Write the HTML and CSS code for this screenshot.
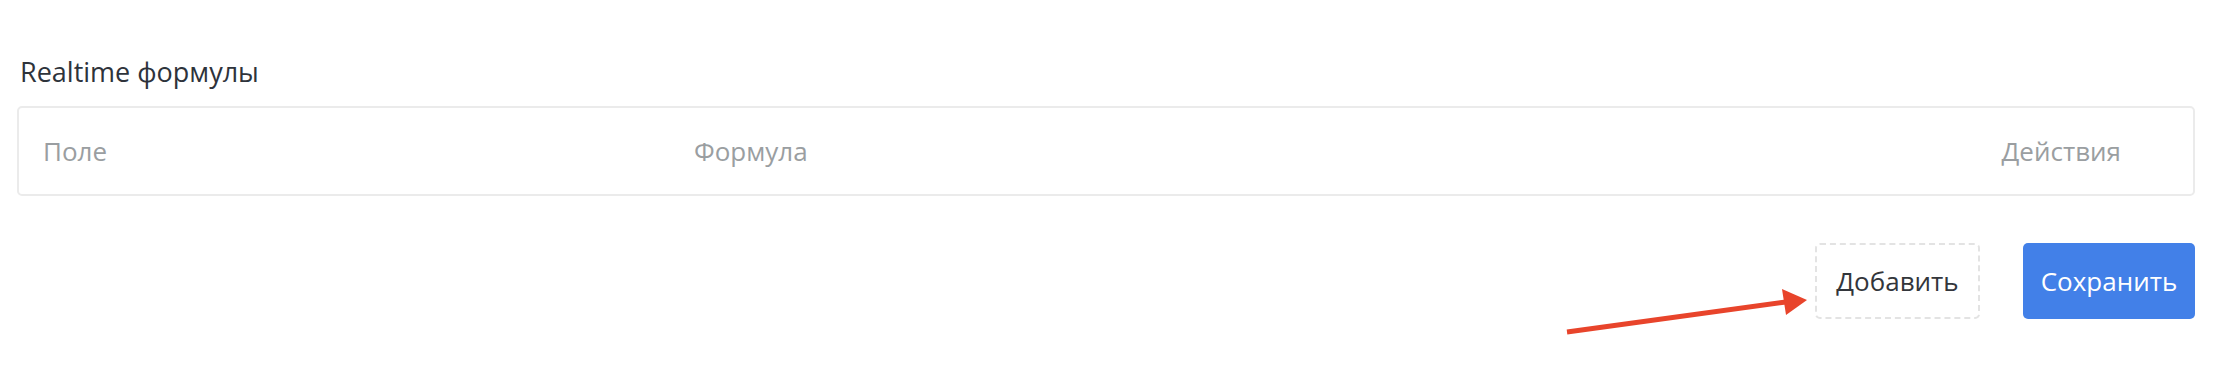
FILE: index.html
```html
<!DOCTYPE html>
<html lang="ru">
<head>
    <meta charset="UTF-8">
    <meta name="viewport" content="width=device-width, initial-scale=1.0">
    <title>Realtime формулы</title>
    <link rel="stylesheet" href="styles.css">
</head>
<body>
    <div class="formulas">
        <h3 class="formulas-title">Realtime формулы</h3>

        <div class="formulas-table">
            <div class="formulas-head">
                <div class="cell">Поле</div>
                <div class="cell">Формула</div>
                <div class="cell cell-actions">Действия</div>
            </div>
        </div>

        <div class="formulas-footer">
            <button class="btn btn-dashed">Добавить</button>
            <button class="btn btn-primary">Сохранить</button>
        </div>

        <!-- annotation arrow pointing to the add button -->
        <svg class="hint-arrow" width="280" height="80" viewBox="0 0 280 80">
            <path d="M17 52 L236 22" stroke="#e8442b" stroke-width="5" fill="none"/>
            <path d="M257 20 L232 9 L236 35 Z" fill="#e8442b"/>
        </svg>
    </div>
</body>
</html>
```

FILE: styles.css
```css
html, body {
    min-height: 378px;
}
body {
    margin: 0;
    font-family: "Open Sans", "Noto Sans", Arial, sans-serif;
    background: #fff;
    color: #2e333b;
}
.formulas {
    position: relative;
    min-height: 378px;
    box-sizing: border-box;
    padding: 52px 21px 0 17px;
}
.formulas-title {
    margin: 0 0 14px 3px;
    font-size: 27px;
    font-weight: 400;
    line-height: 40px;
}
.formulas-table {
    border: 2px solid #ebebeb;
    border-radius: 5px;
    height: 86px;
}
.formulas-head {
    display: grid;
    grid-template-columns: 651px 1fr auto;
    align-items: center;
    height: 86px;
    color: #9a9ea1;
    font-size: 26px;
}
.cell {
    padding: 0 24px;
}
.cell-actions {
    padding-right: 72px;
}
.formulas-footer {
    display: flex;
    justify-content: flex-end;
    gap: 43px;
    margin-top: 47px;
}
.btn {
    font-family: inherit;
    font-size: 26px;
    height: 76px;
    border-radius: 5px;
    cursor: pointer;
}
.btn-dashed {
    width: 165px;
    background: #fff;
    color: #33363b;
    border: 2px dashed #e3e3e3;
}
.btn-primary {
    width: 172px;
    background: #4280e8;
    color: #fff;
    border: none;
}
.hint-arrow {
    position: absolute;
    left: 1550px;
    top: 280px;
}
```
